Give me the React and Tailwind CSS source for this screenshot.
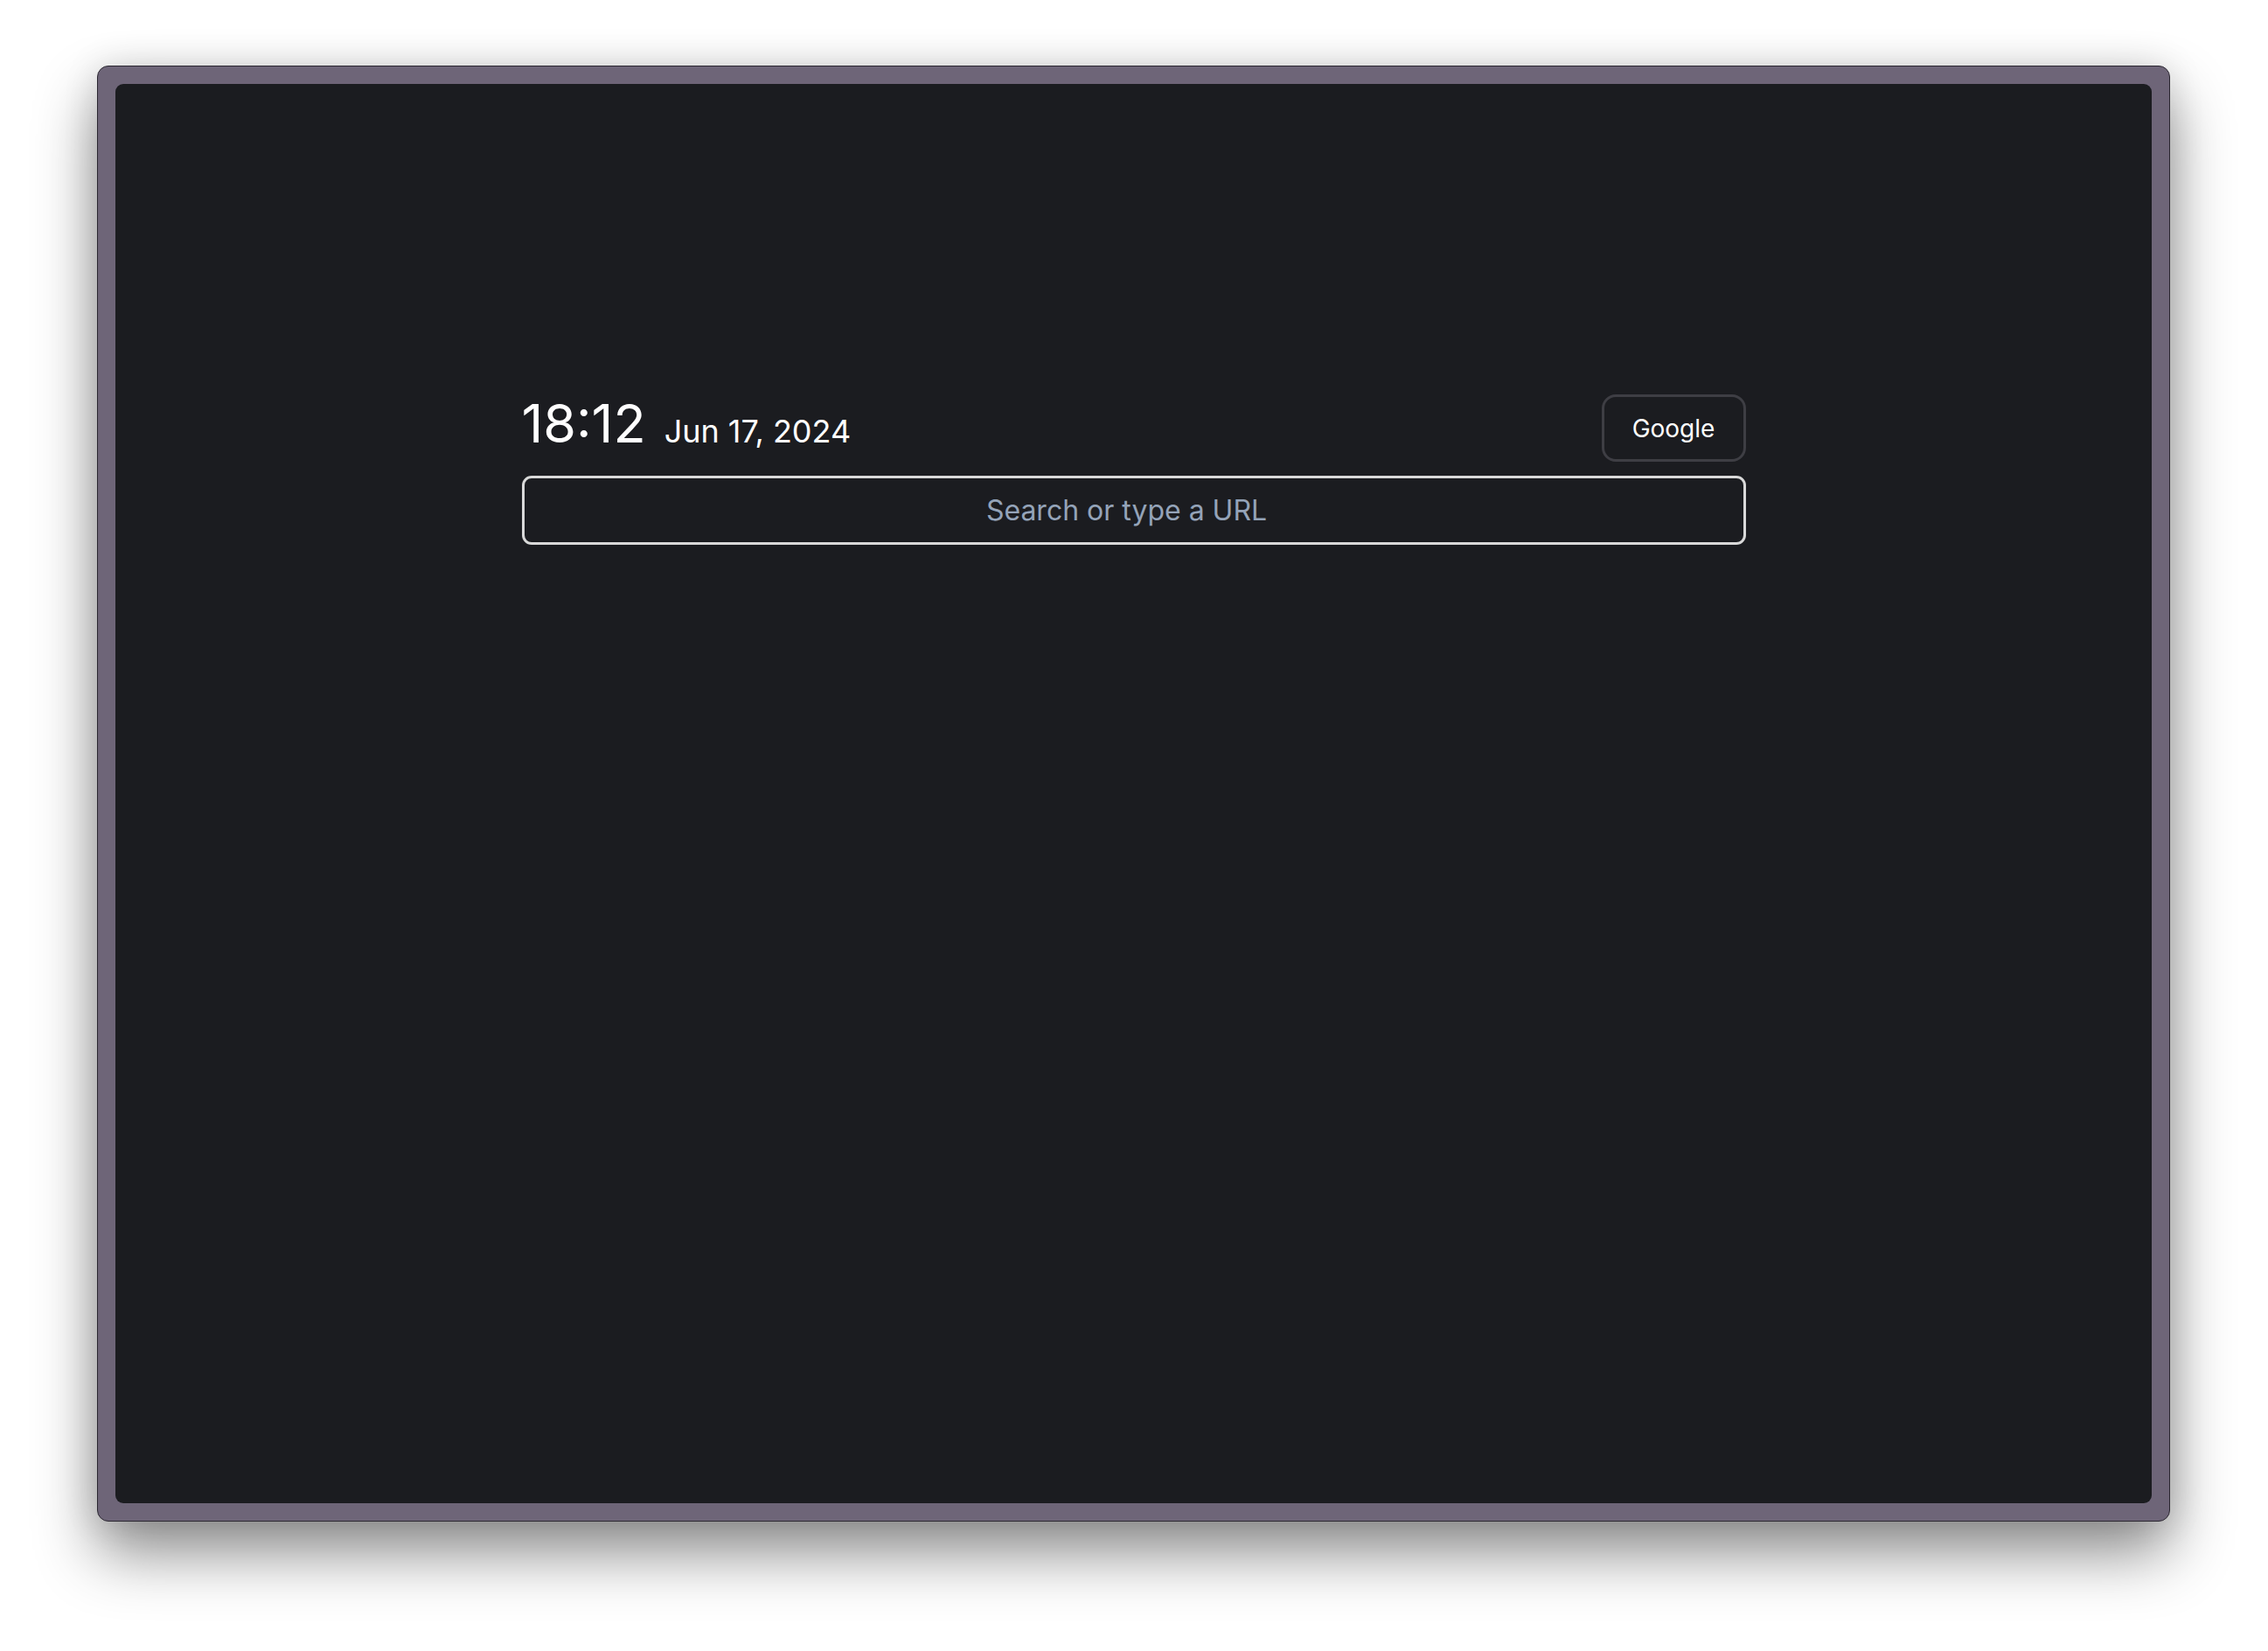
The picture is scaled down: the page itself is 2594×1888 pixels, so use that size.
export default function App() {
  return (
    <div className="w-[2594px] h-[1888px] bg-white pl-[111px] pt-[75px] overflow-hidden" style={{ fontFamily: 'Inter, "Noto Sans", sans-serif' }}>
      {/* window frame */}
      <div className="w-[2371px] h-[1665px] rounded-[13px] bg-[#6e6578] border border-[#2a2630] p-[20px] flex shadow-[0_36px_70px_rgba(0,0,0,0.45),0_0_40px_rgba(0,0,0,0.12)]">
        <div className="flex-1 rounded-[9px] bg-[#1b1c20] pt-[355px]">
          <div className="w-[1400px] mx-auto flex flex-col gap-[16px]">
            <div className="flex items-center justify-between">
              <div className="flex items-baseline gap-[21px] text-white mb-[10px]">
                <span className="text-[61px] leading-none">18:12</span>
                <span className="text-[36px] leading-none">Jun 17, 2024</span>
              </div>
              <button className="w-[165px] h-[77px] rounded-[16px] border-[3px] border-[#3e3e44] text-white text-[28px]">
                Google
              </button>
            </div>
            <div className="h-[79px] rounded-[11px] border-[3px] border-[#d9d9d9] flex items-center justify-center">
              <span className="text-[#94a3b8] text-[32px] -ml-[16px]">Search or type a URL</span>
            </div>
          </div>
        </div>
      </div>
    </div>
  )
}
